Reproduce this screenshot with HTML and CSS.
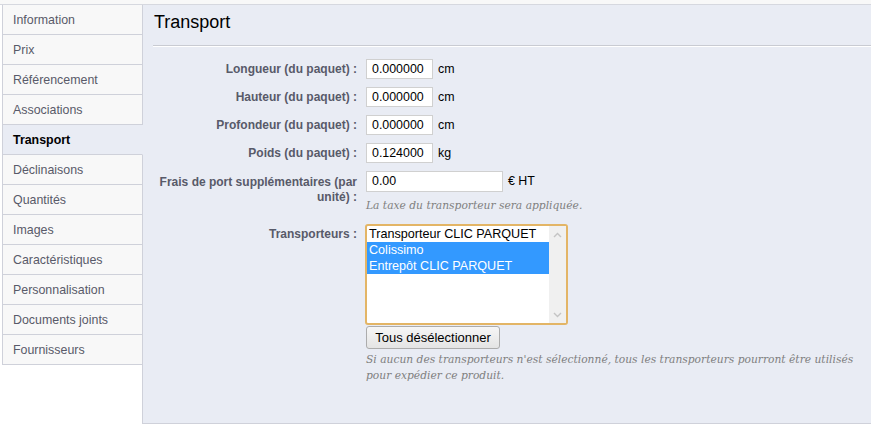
FILE: index.html
```html
<!DOCTYPE html>
<html lang="fr">
<head>
<meta charset="utf-8">
<title>Transport</title>
<link rel="stylesheet" href="styles.css">
</head>
<body>
<div class="topbar"></div>
<div class="layout">
  <ul class="tabs">
    <li class="tab">Information</li>
    <li class="tab">Prix</li>
    <li class="tab">Référencement</li>
    <li class="tab">Associations</li>
    <li class="tab active">Transport</li>
    <li class="tab">Déclinaisons</li>
    <li class="tab">Quantités</li>
    <li class="tab">Images</li>
    <li class="tab">Caractéristiques</li>
    <li class="tab">Personnalisation</li>
    <li class="tab">Documents joints</li>
    <li class="tab">Fournisseurs</li>
  </ul>
  <div class="panel">
    <h2 class="title">Transport</h2>
    <div class="sep"></div>
    <div class="form">
      <label class="lbl">Longueur (du paquet) :</label>
      <div class="field"><span class="input small">0.000000</span><span class="unit">cm</span></div>

      <label class="lbl">Hauteur (du paquet) :</label>
      <div class="field"><span class="input small">0.000000</span><span class="unit">cm</span></div>

      <label class="lbl">Profondeur (du paquet) :</label>
      <div class="field"><span class="input small">0.000000</span><span class="unit">cm</span></div>

      <label class="lbl">Poids (du paquet) :</label>
      <div class="field"><span class="input small">0.124000</span><span class="unit">kg</span></div>

      <label class="lbl multi">Frais de port supplémentaires (par unité) :</label>
      <div class="field-col">
        <div class="field"><span class="input wide">0.00</span><span class="unit">€ HT</span></div>
        <p class="hint">La taxe du transporteur sera appliquée.</p>
      </div>

      <label class="lbl carriers-lbl">Transporteurs :</label>
      <div class="field-col">
        <div class="listbox">
          <div class="options">
            <div class="opt">Transporteur CLIC PARQUET</div>
            <div class="opt sel">Colissimo</div>
            <div class="opt sel">Entrepôt CLIC PARQUET</div>
          </div>
          <div class="scroll">
            <svg class="arrow" width="9" height="6" viewBox="0 0 9 6"><path d="M1 5 L4.5 1.5 L8 5" fill="none" stroke="#c4c4c4" stroke-width="1.4"/></svg>
            <svg class="arrow" width="9" height="6" viewBox="0 0 9 6"><path d="M1 1 L4.5 4.5 L8 1" fill="none" stroke="#c4c4c4" stroke-width="1.4"/></svg>
          </div>
        </div>
        <button class="btn" type="button">Tous désélectionner</button>
        <p class="hint long">Si aucun des transporteurs n'est sélectionné, tous les transporteurs pourront être utilisés pour expédier ce produit.</p>
      </div>
    </div>
  </div>
</div>
</body>
</html>
```

FILE: styles.css
```css
* { box-sizing: border-box; }
html, body { margin: 0; padding: 0; background: #ffffff; }
body {
  font-family: "Liberation Sans", Arial, sans-serif;
  font-size: 12px;
  color: #000;
  width: 871px;
  height: 425px;
  overflow: hidden;
}
.topbar {
  height: 5px;
  background: #f8f8f8;
  border-bottom: 1px solid #d6d8df;
}
.layout {
  display: flex;
  align-items: flex-start;
  padding-left: 2px;
}
.tabs {
  list-style: none;
  margin: 0;
  padding: 0;
  width: 141px;
  flex: none;
  position: relative;
  z-index: 1;
}
.tab {
  height: 30px;
  line-height: 28px;
  padding-top: 1px;
  padding-left: 10px;
  background: #f8f8f8;
  border-left: 1px solid #cfd1da;
  border-right: 1px solid #cfd1da;
  border-bottom: 1px solid #cfd1da;
  color: #585a69;
  font-size: 12.4px;
}
.tab.active {
  background: #e9ecf4;
  border-right-color: #e9ecf4;
  color: #000;
  font-weight: bold;
}
.panel {
  flex: 1;
  margin-left: -1px;
  height: 419px;
  background: #e9ecf4;
  border-left: 1px solid #cfd1da;
  border-bottom: 1px solid #cfd1da;
  padding: 6px 0 0 10px;
}
.title {
  margin: 0 0 0 1px;
  font-size: 18px;
  font-weight: normal;
  line-height: 22px;
  color: #000;
}
.sep {
  margin-top: 12px;
  height: 2px;
  border-top: 1px solid #c9cbd2;
  border-bottom: 1px solid #ffffff;
}
.form {
  display: grid;
  grid-template-columns: 204px 1fr;
  column-gap: 9px;
  row-gap: 8px;
  margin-top: 12px;
  align-items: start;
}
.lbl {
  text-align: right;
  font-weight: bold;
  color: #585a69;
  font-size: 12px;
  line-height: 20px;
}
.lbl.multi {
  line-height: 15px;
  padding-top: 4px;
  padding-left: 4px;
}
.field {
  display: flex;
  align-items: center;
  gap: 5px;
  height: 20px;
}
.field-col {
  display: flex;
  flex-direction: column;
  align-items: flex-start;
}
.input {
  display: block;
  height: 20px;
  line-height: 18px;
  background: #fff;
  border: 1px solid #d0d0d0;
  padding-left: 5px;
  color: #000;
  font-size: 12.4px;
}
.input.small { width: 67px; }
.input.wide { width: 137px; height: 21px; }
.unit { color: #000; font-size: 12.4px; }
.hint {
  margin: 7px 0 0 0;
  font-family: "DejaVu Serif", Georgia, serif;
  font-style: italic;
  font-size: 10.7px;
  line-height: 16px;
  color: #7f7f7f;
}
.hint.long {
  margin-top: 3px;
  width: 492px;
}
.carriers-lbl { margin-top: 2px; }
.field-col .listbox { margin-top: 2px; }
.listbox {
  width: 203px;
  height: 101px;
  border: 2px solid #e3b566;
  border-radius: 3px;
  background: #fff;
  display: flex;
  margin-left: -1px;
}
.options {
  flex: 1;
}
.opt {
  height: 16px;
  line-height: 16px;
  padding-left: 2px;
  font-size: 12.6px;
  color: #000;
  white-space: nowrap;
}
.opt.sel {
  background: #3399ff;
  color: #fff;
}
.scroll {
  width: 17px;
  background: #f0f0f0;
  display: flex;
  flex-direction: column;
  justify-content: space-between;
  align-items: center;
  padding: 6px 0 5px 0;
}
.arrow { display: block; }
.btn {
  margin-top: 1px;
  width: 134px;
  height: 23px;
  padding: 0;
  font-family: "Liberation Sans", Arial, sans-serif;
  font-size: 13px;
  color: #000;
  background: linear-gradient(#f6f6f6, #e4e4e4);
  border: 1px solid #acacac;
  border-radius: 3px;
}
```
